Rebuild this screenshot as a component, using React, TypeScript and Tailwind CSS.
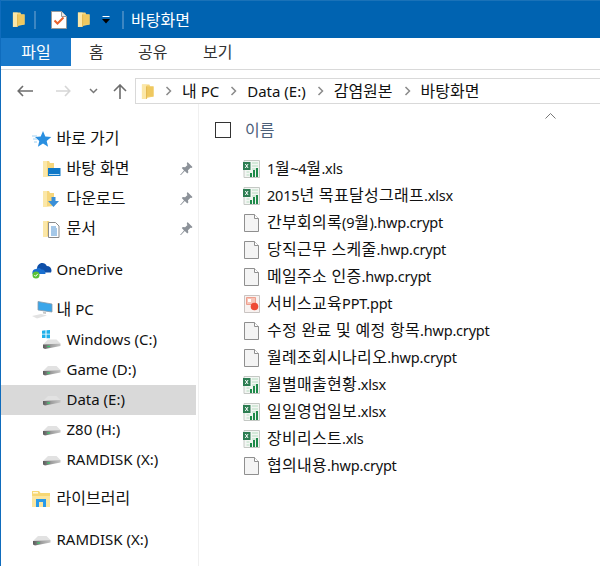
import React from 'react';

const FONT = "font-['Noto_Sans','Noto_Sans_CJK_KR',sans-serif]";

const FolderNarrow: React.FC<{ className?: string }> = ({ className }) => (
  <svg className={className} width="13" height="17" viewBox="0 0 14 17">
    <path d="M1 1h8l1 2h3.500v11L1 16.500z" fill="#f6d67c" />
    <path d="M1 1h5v15.500L1 16.500z" fill="#fbe7a8" />
    <path d="M6 3h7.500v11H6z" fill="#efc860" />
    <path d="M6 3v13.500" stroke="#e3b64d" strokeWidth="1" />
  </svg>
);

const ChecklistIcon = () => (
  <svg width="16" height="18" viewBox="0 0 16 18">
    <path d="M.5.500h10l5 5v12H.500z" fill="#fff" stroke="#9a9a9a" />
    <path d="M10.500.500v5h5" fill="#e8e8e8" stroke="#9a9a9a" />
    <path d="M3.500 9.500l3 3 6-6" fill="none" stroke="#e8612c" strokeWidth="2" />
  </svg>
);

const Star = () => (
  <svg width="20" height="18" viewBox="0 0 20 18">
    <path d="M11 1l2.300 5.500 6 .500-4.600 3.900 1.400 5.900L11 13.600 5.900 16.800l1.400-5.900L3 7l5.700-.500z" fill="#2a8fe0" />
    <path d="M0 6h5M1 9h4M2 12h3" stroke="#9fd0f2" strokeWidth="1" />
  </svg>
);

const DesktopFolder = () => (
  <svg width="19" height="18" viewBox="0 0 19 18">
    <path d="M1 1h6l1 2h4v13L1 17z" fill="#f6d67c" />
    <path d="M1 1h4v16H1z" fill="#fbe7a8" />
    <path d="M6 8h12.500v8H6z" fill="#0f78c8" />
    <path d="M7 14.500h10.500" stroke="#bfe0f5" strokeWidth="1" />
  </svg>
);

const DownloadFolder = () => (
  <svg width="19" height="18" viewBox="0 0 19 18">
    <path d="M1 1h6l1 2h4v13L1 17z" fill="#f6d67c" />
    <path d="M1 1h4v16H1z" fill="#fbe7a8" />
    <path d="M9.500 7h4v4h3.500l-5.500 6-5.500-6h3.500z" fill="#3a8fd8" />
  </svg>
);

const DocFolder = () => (
  <svg width="19" height="18" viewBox="0 0 19 18">
    <path d="M1 1h6l1 2h4v13L1 17z" fill="#f6d67c" />
    <path d="M1 1h4v16H1z" fill="#fbe7a8" />
    <path d="M6.500 2.500h7l3.500 3.500v11.500H6.500z" fill="#fff" stroke="#8a8a8a" />
    <path d="M9 7h5M9 9h6M9 11h6M9 13h6M9 15h6" stroke="#4a90d0" strokeWidth="1" />
  </svg>
);

const Pin = () => (
  <svg width="13" height="14" viewBox="0 0 13 14">
    <path d="M7.500 0l5 5-1 1-1-.300-2.500 2.500.300 2.300-1 1-2.500-2.500L1 13 0 13l4-4.500L1.800 6l1-1 2.300.300L7.500 3l-.800-1z" fill="#8c9299" />
  </svg>
);

const OneDriveIcon = () => (
  <svg width="20" height="18" viewBox="0 0 20 18">
    <path d="M5 8c0-3.500 2.300-6 5.300-6 2 0 3.700 1 4.500 3 2.700 0 4.700 2 4.700 4.500 0 .800-.200 1.500-.500 2H6z" fill="#0f4fa8" />
    <path d="M.5 13c-.600-2.800 1-5 3.700-5 1.600-1.700 4.300-1.200 5.300.600 2.200-.500 4 1 4 4.400z" fill="#1a6fd0" />
    <circle cx="4" cy="14" r="3.500" fill="#5bc236" />
    <path d="M2.300 14l1.300 1.300 2.200-2.500" fill="none" stroke="#fff" strokeWidth="1" />
  </svg>
);

const PcIcon = () => (
  <svg width="21" height="18" viewBox="0 0 21 18">
    <path d="M6 .500l14 2.500v8L6 9z" fill="#3aa6ea" stroke="#8a9aa8" strokeWidth=".8" />
    <path d="M11 10.500l3 .500v2l-3-.500z" fill="#c8c8c8" />
    <path d="M0 15l9-2 6 1.500-10 3z" fill="#e2e2e2" />
  </svg>
);

const Drive: React.FC<{ windows?: boolean }> = ({ windows }) => (
  <svg width="19" height={windows ? 20 : 11} viewBox={windows ? '0 0 19 20' : '0 8.500 19 11'}>
    <defs>
      <linearGradient id="driveFront" x1="0" y1="0" x2="1" y2="0">
        <stop offset="0" stopColor="#5a5a5a" />
        <stop offset="0.500" stopColor="#a0a0a0" />
        <stop offset="1" stopColor="#c4c4c4" />
      </linearGradient>
    </defs>
    {windows && <path d="M0 .800l3.500-.500v3.500H0zM4.500.200L8 0v3.800H4.500zM0 4.500h3.500v3.500H0zM4.500 4.500H8v3.800H4.500z" fill="#1fb0ea" />}
    <path d="M1 14.500l5-5h8.500l4 4z" fill="#e2e2e2" />
    <path d="M1 14.500l17.500-1v2.500L3 19l-2-1z" fill="url(#driveFront)" />
    <path d="M5 16.500h3" stroke="#39c46c" strokeWidth="1.200" />
  </svg>
);

const LibraryIcon = () => (
  <svg width="18" height="16" viewBox="0 0 18 16">
    <path d="M0 0h7l1.500 2H18v14H0z" fill="#f7d774" />
    <path d="M1 1h5v1.500H1z" fill="#fff8dc" />
    <path d="M0 5h18v11H0z" fill="#fce6a0" />
    <path d="M4 8h10v8h-3v-5H7v5H4z" fill="#2a9ae8" />
  </svg>
);

const ExcelIcon = () => (
  <svg width="17" height="18" viewBox="0 0 17 18">
    <path d="M1 .500h15.500v17H1z" fill="#f3f6f3" stroke="#c4c8c4" />
    <path d="M9 3h6M9 6h6M9 9h6M3.500 12h3M3.500 15h3" stroke="#b5dcc0" strokeWidth="1" />
    <path d="M0 2h7.500v8H0z" fill="#2d7d52" />
    <path d="M2.300 4l2.800 4M5.100 4L2.300 8" stroke="#fff" strokeWidth="1" />
    <path d="M7 13h2v4H7zM10 10h2v7h-2zM13 8h2v9h-2z" fill="#1e8a4a" />
  </svg>
);

const BlankIcon = () => (
  <svg width="15" height="18" viewBox="0 0 15 18">
    <path d="M.5.500h10l4 4v13H.500z" fill="#f4f4f4" stroke="#8f8f8f" />
    <path d="M10.500.500v4h4" fill="#fff" stroke="#8f8f8f" />
  </svg>
);

const PptIcon = () => (
  <svg width="16" height="18" viewBox="0 0 16 18">
    <path d="M.5.500h15v17H.500z" fill="#f8f2f0" stroke="#c9c4c2" />
    <path d="M2.500 2.500h9v7h-9z" fill="#f6c5b8" stroke="#ee9f8e" />
    <path d="M4 4h3v3H4z" fill="#fff" />
    <circle cx="10.500" cy="11.500" r="3.800" fill="#ee4b35" />
  </svg>
);

// hangul runs need a bigger size than latin ones to match the reference widths
const Mixed: React.FC<{ text: string; latin?: string; hangul?: string }> = ({
  text,
  latin = 'text-[15px]',
  hangul = 'text-[16px]',
}) => (
  <span className="whitespace-nowrap leading-[20px]">
    {text.split(/([가-힣]+(?: [가-힣]+)*)/).map((part, i) =>
      part ? (
        <span key={i} className={/[가-힣]/.test(part) ? hangul : latin}>
          {part}
        </span>
      ) : null,
    )}
  </span>
);

type NavItem = { label: string; icon: React.ReactNode; pin?: boolean; active?: boolean };

const NavRow: React.FC<NavItem & { child?: boolean }> = ({ label, icon, pin, active, child }) => (
  <div className={`flex items-center h-[30px] w-[195px] ${child ? 'pl-[41px]' : 'pl-[31px]'} ${active ? 'bg-[#d9d9d9]' : ''}`}>
    <span className="w-[24.500px] flex items-center shrink-0">{icon}</span>
    <span className="flex-1 text-[#111] flex items-center pb-[2px]">
      <Mixed text={label} />
    </span>
    {pin && <span className="mr-[3px] flex"><Pin /></span>}
  </div>
);

const files: { name: string; kind: 'xls' | 'blank' | 'ppt' }[] = [
  { name: '1월~4월.xls', kind: 'xls' },
  { name: '2015년 목표달성그래프.xlsx', kind: 'xls' },
  { name: '간부회의록(9월).hwp.crypt', kind: 'blank' },
  { name: '당직근무 스케줄.hwp.crypt', kind: 'blank' },
  { name: '메일주소 인증.hwp.crypt', kind: 'blank' },
  { name: '서비스교육PPT.ppt', kind: 'ppt' },
  { name: '수정 완료 및 예정 항목.hwp.crypt', kind: 'blank' },
  { name: '월례조회시나리오.hwp.crypt', kind: 'blank' },
  { name: '월별매출현황.xlsx', kind: 'xls' },
  { name: '일일영업일보.xlsx', kind: 'xls' },
  { name: '장비리스트.xls', kind: 'xls' },
  { name: '협의내용.hwp.crypt', kind: 'blank' },
];

const Crumb: React.FC<{ text: string }> = ({ text }) => (
  <>
    <svg className="ml-[11px]" width="7" height="10" viewBox="0 0 7 10">
      <path d="M1.500 1l4 4-4 4" fill="none" stroke="#8a8a8a" strokeWidth="1.500" />
    </svg>
    <span className="text-[#111] ml-[10px]">
      <Mixed text={text} />
    </span>
  </>
);

export default function App() {
  return (
    <div className={`${FONT} w-[600px] h-[566px] overflow-hidden bg-white border-l border-[#0f6cbd] flex flex-col`}>
      {/* title bar */}
      <div className="h-[38px] bg-[#0063b1] border-t border-[#1a72b8] flex items-center pl-[11px] shrink-0">
        <FolderNarrow />
        <span className="w-[2px] h-[18px] bg-[#3d86c2] ml-[9px] mr-[15px]" />
        <ChecklistIcon />
        <span className="ml-[10px] flex"><FolderNarrow /></span>
        <svg className="ml-[12px]" width="8" height="8" viewBox="0 0 8 8">
          <path d="M.5 0h7v1h-7z" fill="#fff" />
          <path d="M0 3h8L4 7.500z" fill="#000" />
        </svg>
        <span className="w-[2px] h-[18px] bg-[#3d86c2] ml-[12px] mr-[7px]" />
        <span className="text-[16px] text-white">바탕화면</span>
      </div>

      {/* ribbon tabs */}
      <div className="h-[28px] flex items-center shrink-0 text-[16px]">
        <div className="w-[70px] h-full bg-[#1979ca] text-white flex items-center justify-center">파일</div>
        <div className="w-[67px] pl-[18px] text-[#333]">홈</div>
        <div className="w-[65px] text-[#333]">공유</div>
        <div className="text-[#333]">보기</div>
      </div>
      <div className="h-[3px] shrink-0 border-b border-[#d9d9d9] box-content" />

      {/* nav row */}
      <div className="h-[34px] flex items-center shrink-0 pl-[16px] pt-[8px]">
        <svg width="16" height="12" viewBox="0 0 16 12">
          <path d="M6 1L1.200 6 6 11M1.200 6H16" fill="none" stroke="#6d6d6d" strokeWidth="1.600" />
        </svg>
        <svg className="ml-[23px]" width="15" height="12" viewBox="0 0 15 12">
          <path d="M9 1l4.800 5L9 11M13.800 6H0" fill="none" stroke="#d6d6d6" strokeWidth="1.600" />
        </svg>
        <svg className="ml-[18px]" width="9" height="6" viewBox="0 0 9 6">
          <path d="M1 1l3.500 3.500L8 1" fill="none" stroke="#777" strokeWidth="1.500" />
        </svg>
        <svg className="ml-[15px]" width="14" height="15" viewBox="0 0 14 15">
          <path d="M1 7l6-6 6 6M7 1v14" fill="none" stroke="#6d6d6d" strokeWidth="1.600" />
        </svg>
        <div className="ml-[8px] flex-1 h-[26px] border border-r-0 border-[#d9d9d9] flex items-center pl-[5px]">
          <FolderNarrow />
          <span className="flex items-center">
            <Crumb text="내 PC" />
            <Crumb text="Data (E:)" />
            <Crumb text="감염원본" />
            <Crumb text="바탕화면" />
          </span>
        </div>
      </div>

      <div className="flex flex-1 min-h-0">
        {/* sidebar */}
        <div className="w-[198px] shrink-0 border-r border-[#f0f0f0] pt-[20px]">
          <NavRow label="바로 가기" icon={<Star />} />
          <NavRow child label="바탕 화면" icon={<DesktopFolder />} pin />
          <NavRow child label="다운로드" icon={<DownloadFolder />} pin />
          <NavRow child label="문서" icon={<DocFolder />} pin />
          <div className="mt-[11px]"><NavRow label="OneDrive" icon={<OneDriveIcon />} /></div>
          <div className="mt-[10px]"><NavRow label="내 PC" icon={<PcIcon />} /></div>
          <NavRow child label="Windows (C:)" icon={<Drive windows />} />
          <NavRow child label="Game (D:)" icon={<Drive />} />
          <NavRow child active label="Data (E:)" icon={<Drive />} />
          <NavRow child label="Z80 (H:)" icon={<Drive />} />
          <NavRow child label="RAMDISK (X:)" icon={<Drive />} />
          <div className="mt-[9px]"><NavRow label="라이브러리" icon={<LibraryIcon />} /></div>
          <div className="mt-[11px]"><NavRow label="RAMDISK (X:)" icon={<Drive />} /></div>
        </div>

        {/* file list */}
        <div className="flex-1 min-w-0 pl-[16px] pr-[44px]">
          <div className="flex justify-end h-[9px] pt-[9px]">
            <svg width="11" height="6" viewBox="0 0 11 6">
              <path d="M.5 5.500l5-5 5 5" fill="none" stroke="#777" strokeWidth="1" />
            </svg>
          </div>
          <div className="flex items-center h-[34px]">
            <span className="w-[16px] h-[16px] border border-[#333] block" />
            <span className="ml-[14px] text-[16px] text-[#4c607a]">이름</span>
          </div>
          <div className="mt-[8px] pl-[28px]">
            {files.map((f) => (
              <div key={f.name} className="flex items-center h-[27px]">
                <span className="w-[24px] flex items-center shrink-0">
                  {f.kind === 'xls' && <ExcelIcon />}
                  {f.kind === 'blank' && <span className="ml-[1px] flex"><BlankIcon /></span>}
                  {f.kind === 'ppt' && <span className="ml-[1px] flex"><PptIcon /></span>}
                </span>
                <span className="text-[#111] flex items-center pb-[2px]">
                  <Mixed text={f.name} latin="text-[14.500px] tracking-[-0.2px]" hangul="text-[16px] tracking-[0.3px]" />
                </span>
              </div>
            ))}
          </div>
        </div>
      </div>
    </div>
  );
}
